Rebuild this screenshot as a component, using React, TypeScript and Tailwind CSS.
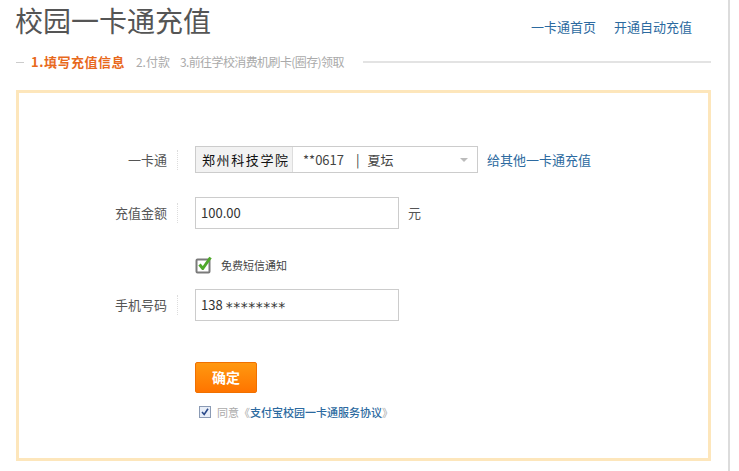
import React from "react";

const font = { fontFamily: '"Noto Sans CJK SC", "Noto Sans", sans-serif' };

function GreenCheck() {
  return (
    <svg width="18" height="18" viewBox="0 0 18 18">
      <rect x="1.5" y="3.5" width="13" height="13" rx="1" fill="#fff" stroke="#7a7a7a" strokeWidth="2" />
      <path d="M4.5 8.5 L7.8 12.5 L15.5 1.5" fill="none" stroke="#4fa82a" strokeWidth="3" strokeLinejoin="round" />
    </svg>
  );
}

function SmallCheck() {
  return (
    <svg width="12" height="12" viewBox="0 0 12 12">
      <rect x="0.5" y="0.5" width="11" height="11" fill="#e8eef8" stroke="#8a9ab4" />
      <path d="M3 6 L5.2 8.5 L9 2.8" fill="none" stroke="#2a4a8a" strokeWidth="1.6" />
    </svg>
  );
}

function Label({ text }: { text: string }) {
  return (
    <div className="flex items-center">
      <div className="w-[148px] text-right text-[13px] text-[#555]">{text}</div>
      <div className="ml-[10px] mr-[17px] h-[20px] border-l border-dotted border-[#ddd]" />
    </div>
  );
}

export default function App() {
  return (
    <div className="w-[739px] h-[471px] bg-white overflow-hidden flex" style={font}>
      <div className="w-[728px] shrink-0 flex flex-col">
        {/* Header */}
        <div className="flex items-start h-[48px]">
          <div className="ml-[15px] mt-[0px] text-[28px] leading-[40px] text-[#555]">校园一卡通充值</div>
          <div className="ml-auto mr-[36px] mt-[17px] flex gap-[18px] text-[13px] leading-[20px] text-[#2c6aa0]">
            <span>一卡通首页</span>
            <span>开通自动充值</span>
          </div>
        </div>
        {/* Steps */}
        <div className="flex items-center h-[28px] text-[12px]">
          <div className="ml-[16px] w-[8px] border-t border-[#ccc]" />
          <span className="ml-[7px] text-[13px] tracking-[0.5px] font-bold text-[#e8691c]">1.填写充值信息</span>
          <span className="ml-[11px] text-[#aaa]">2.付款</span>
          <span className="ml-[10px] tracking-[-0.6px] text-[#aaa]">3.前往学校消费机刷卡(圈存)领取</span>
          <div className="ml-[19px] mr-[17px] flex-1 border-t-2 border-[#e3e3e3]" />
        </div>
        {/* Frame */}
        <div className="ml-[16px] mt-[14px] w-[695px] h-[371px] border-[3px] border-[#fde6bb] flex flex-col">
          <div className="mt-[53px] flex items-center h-[27px]">
            <Label text="一卡通" />
            <div className="w-[283px] h-[27px] border border-[#ccc] flex items-center">
              <div className="w-[97px] h-full bg-[#f2f2f2] border-r border-[#ddd] flex items-center pl-[6px] text-[13px] tracking-[1.6px] text-[#111]" style={{ fontFamily: '"Noto Sans CJK SC", serif' }}>
                郑州科技学院
              </div>
              <span className="ml-[10px] text-[13px] text-[#444]">**0617</span>
              <span className="ml-[12px] text-[13px] text-[#444]">|</span>
              <span className="ml-[8px] text-[13px] text-[#444]">夏坛</span>
              <div className="ml-auto mr-[9px] w-0 h-0 border-l-[4px] border-r-[4px] border-t-[4px] border-l-transparent border-r-transparent border-t-[#bbb]" />
            </div>
            <span className="ml-[9px] text-[13px] text-[#2c6aa0]">给其他一卡通充值</span>
          </div>
          <div className="mt-[24px] flex items-center h-[32px]">
            <Label text="充值金额" />
            <div className="w-[204px] h-[32px] border border-[#ccc] flex items-center pl-[5px] text-[13px] text-[#333]">100.00</div>
            <span className="ml-[9px] text-[13px] text-[#555]">元</span>
          </div>
          <div className="mt-[27px] flex items-center h-[18px] pl-[176px]">
            <GreenCheck />
            <span className="ml-[8px] text-[11px] text-[#444]">免费短信通知</span>
          </div>
          <div className="mt-[15px] flex items-center h-[32px]">
            <Label text="手机号码" />
            <div className="w-[204px] h-[32px] border border-[#ccc] flex items-center pl-[5px] text-[13px] text-[#333]">
              <span>138</span>
              <span className="ml-[3px] text-[14px] tracking-[0.5px] leading-none translate-y-[2px]" style={{ fontFamily: '"DejaVu Sans", sans-serif' }}>********</span>
            </div>
          </div>
          <div className="mt-[41px] pl-[176px]">
            <div className="w-[62px] h-[31px] rounded-[2px] border border-[#f07000] bg-linear-to-b from-[#ff9810] to-[#ff7400] flex items-center justify-center text-[14px] font-bold text-white">
              确定
            </div>
          </div>
          <div className="mt-[12px] pl-[180px] flex items-center h-[14px] text-[11px]">
            <SmallCheck />
            <span className="ml-[6px] text-[#aaa]">同意《</span>
            <span className="text-[#2c6aa0] font-medium">支付宝校园一卡通服务协议</span>
            <span className="text-[#aaa]">》</span>
          </div>
        </div>
      </div>
      <div className="w-[2px] h-full bg-[#dcdcdc]" />
    </div>
  );
}
